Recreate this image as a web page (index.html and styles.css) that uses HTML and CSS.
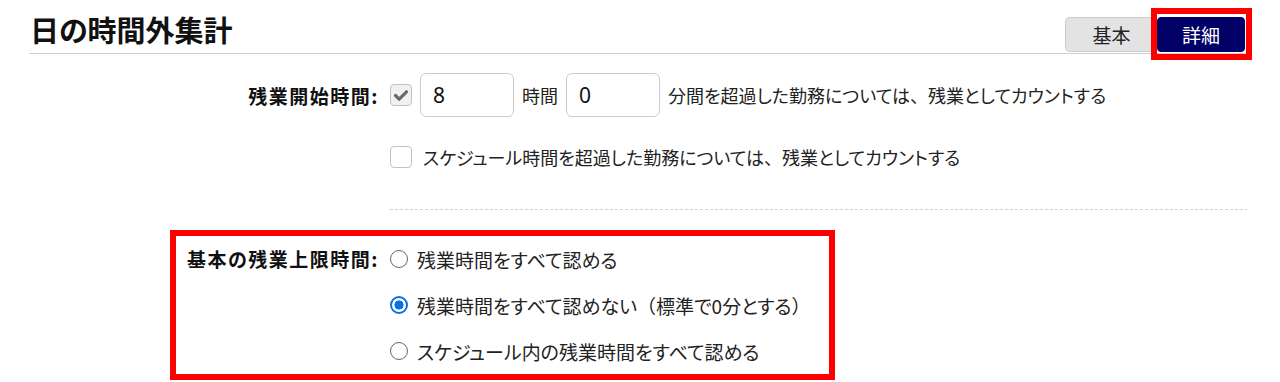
FILE: index.html
```html
<!DOCTYPE html>
<html lang="ja">
<head>
<meta charset="utf-8">
<title>日の時間外集計</title>
<link rel="stylesheet" href="styles.css">
</head>
<body>
<div class="header">
  <h1 class="title">日の時間外集計</h1>
  <div class="seg">
    <button class="seg-btn seg-basic" type="button">基本</button>
    <button class="seg-btn seg-detail" type="button">詳細</button>
  </div>
</div>

<div class="form">
  <div class="row row-first">
    <div class="label">残業開始時間:</div>
    <div class="field">
      <span class="check check-disabled">
        <svg viewBox="0 0 22 22" width="22" height="22"><path d="M5.5 11.5 L9.2 15.2 L16.5 7.8" fill="none" stroke="#6a6a6a" stroke-width="3.2" stroke-linecap="round" stroke-linejoin="round"/></svg>
      </span>
      <span class="num">8</span>
      <span class="txt">時間</span>
      <span class="num">0</span>
      <span class="txt">分間を超過した勤務については<span class="fw">、</span>残業としてカウントする</span>
    </div>
  </div>
  <div class="row row-second">
    <div class="label"></div>
    <div class="field field-wide">
      <span class="check"></span>
      <span class="txt">スケジュール時間を超過した勤務については<span class="fw">、</span>残業としてカウントする</span>
    </div>
  </div>
  <div class="divider"></div>

  <div class="group">
    <div class="label label-top">基本の残業上限時間:</div>
    <div class="options">
      <div class="opt"><span class="radio"></span><span class="txt">残業時間をすべて認める</span></div>
      <div class="opt"><span class="radio radio-on"></span><span class="txt">残業時間をすべて認めない<span class="fw">（</span>標準で0分とする<span class="fw">）</span></span></div>
      <div class="opt"><span class="radio"></span><span class="txt">スケジュール内の残業時間をすべて認める</span></div>
    </div>
  </div>
</div>
</body>
</html>
```
FILE: styles.css
```css
html, body {
  margin: 0;
  padding: 0;
  background: #fff;
}
body {
  font-family: "Noto Sans CJK JP", "Noto Sans", sans-serif;
  font-feature-settings: "palt";
  color: #222;
  font-size: 19px;
  min-height: 382px;
}
.fw {
  font-feature-settings: normal;
}

.header {
  margin: 0 32px 0 29px;
  height: 54px;
  box-sizing: border-box;
  border-bottom: 1px solid #cfcfcf;
  padding-bottom: 1px;
  display: flex;
  justify-content: space-between;
  align-items: flex-end;
}
.title {
  margin: 0 0 5px 1px;
  font-size: 29px;
  line-height: 35px;
  font-weight: 700;
  color: #111;
}
.seg {
  display: flex;
  margin-right: 3px;
}
.seg-btn {
  font-family: inherit;
  font-feature-settings: "palt";
  font-size: 19px;
  height: 35px;
  line-height: 33px;
  padding: 0;
  margin: 0;
  box-sizing: border-box;
}
.seg-basic {
  width: 92px;
  background: #e3e3e3;
  border: 1px solid #cdcdcd;
  border-right: none;
  border-radius: 5px 0 0 5px;
  color: #222;
}
.seg-detail {
  width: 88px;
  background: #000066;
  border: 1px solid #000066;
  border-radius: 4px;
  color: #fff;
  position: relative;
}
.seg-detail::after {
  content: "";
  position: absolute;
  left: -7px;
  right: -8px;
  top: -10px;
  bottom: -9px;
  border: 6px solid #ff0000;
}

.form {
  margin-top: 19px;
}
.row {
  display: grid;
  grid-template-columns: 378px 1fr;
  column-gap: 12px;
  height: 44px;
  align-items: center;
}
.row-second {
  margin-top: 18px;
}
.label {
  text-align: right;
  font-weight: 700;
  color: #111;
  letter-spacing: 1.5px;
  margin-right: -1px;
}
.field {
  display: flex;
  align-items: center;
  gap: 8px;
  font-size: 18px;
}
.field-wide {
  gap: 11px;
}
.check {
  width: 22px;
  height: 22px;
  box-sizing: border-box;
  border: 1px solid #c2c2c2;
  border-radius: 4px;
  background: #fff;
  display: inline-flex;
  flex: none;
}
.check svg {
  margin: -1px;
}
.check-disabled {
  background: #f1f1f1;
}
.num {
  width: 94px;
  height: 44px;
  box-sizing: border-box;
  border: 1px solid #cccccc;
  border-radius: 6px;
  padding-left: 12px;
  font-family: "Noto Sans", sans-serif;
  font-size: 21px;
  line-height: 42px;
  color: #111;
  flex: none;
}
.txt {
  white-space: nowrap;
}

.divider {
  margin: 30px 0 0 390px;
  width: 857px;
  height: 1px;
  background: repeating-linear-gradient(90deg, #d2d2d2 0 3px, transparent 3px 5px);
}

.group {
  position: relative;
  margin-top: 26px;
  display: grid;
  grid-template-columns: 378px 1fr;
  column-gap: 12px;
}
.group::after {
  content: "";
  position: absolute;
  left: 170px;
  top: -6px;
  width: 665px;
  height: 150px;
  box-sizing: border-box;
  border: 6px solid #ff0000;
}
.label-top {
  height: 46px;
  line-height: 46px;
}
.options {
  display: flex;
  flex-direction: column;
}
.opt {
  height: 46px;
  display: flex;
  align-items: center;
  gap: 9px;
}
.radio {
  width: 18px;
  height: 18px;
  box-sizing: border-box;
  border: 1.5px solid #666;
  border-radius: 50%;
  background: #fff;
  flex: none;
}
.radio-on {
  border: 2px solid #0a6fe6;
  background: radial-gradient(circle, #0a6fe6 0 4.3px, #fff 4.8px);
}
```
